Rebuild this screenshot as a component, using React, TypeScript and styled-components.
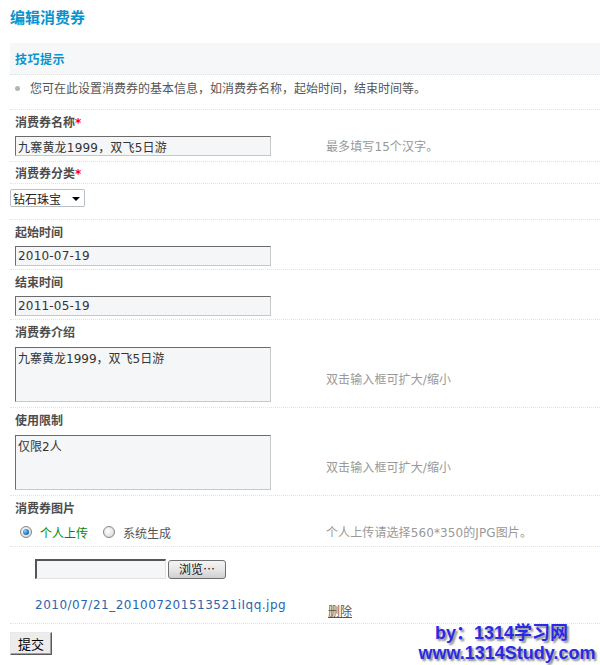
import React from "react";
import styled, { createGlobalStyle } from "styled-components";

const Global = createGlobalStyle`
  html, body { margin: 0; padding: 0; background: #fff; overflow: hidden; }
  body {
    font: 12px "DejaVu Sans", "Noto Sans CJK SC", sans-serif;
    color: #555;
  }
  * { box-sizing: border-box; }
`;

const DOT = "1px dotted #cfe6f7";

const Page = styled.div`
  position: relative;
  width: 600px;
  height: 665px;
  padding-left: 10px;
`;

const Title = styled.h3`
  margin: 0;
  height: 43px;
  line-height: 33px;
  font-size: 15px;
  font-weight: bold;
  color: #0a93cc;
  font-family: "Noto Sans CJK SC", sans-serif;
`;

const TipsHead = styled.div`
  height: 32px;
  line-height: 31px;
  padding-left: 5px;
  background: #f6f7f9;
  border-bottom: ${DOT};
  font-weight: bold;
  color: #0a93cc;
  font-family: "Noto Sans CJK SC", sans-serif;
  letter-spacing: 0.5px;
`;

const TipsItem = styled.div`
  display: flex;
  align-items: center;
  height: 35px;
  padding: 5px 0 12px 5px;
  line-height: 18px;
  border-bottom: ${DOT};
  color: #555;
`;

const Bullet = styled.span`
  width: 5px;
  height: 5px;
  border-radius: 50%;
  background: #b5b5b5;
  margin-right: 10px;
  flex: none;
`;

const Label = styled.div<{ $h: number; $border?: boolean }>`
  height: ${(p) => p.$h + (p.$border ? 1 : 0)}px;
  line-height: ${(p) => p.$h + 1}px;
  padding-left: 5px;
  font-weight: bold;
  color: #4d4d4d;
  font-family: "Noto Sans CJK SC", sans-serif;
  border-bottom: ${(p) => (p.$border ? DOT : "none")};
`;

const Star = styled.span`
  color: #ff0000;
  font-family: "DejaVu Sans", sans-serif;
`;

const FieldRow = styled.div<{ $h: number }>`
  display: grid;
  grid-template-columns: 316px 1fr;
  height: ${(p) => p.$h + 1}px;
  border-bottom: ${DOT};
`;

const Cell = styled.div<{ $pt: number; $pl?: number }>`
  padding-top: ${(p) => p.$pt}px;
  padding-left: ${(p) => p.$pl ?? 5}px;
`;

const Hint = styled.div<{ $shift?: number }>`
  align-self: center;
  padding-top: ${(p) => p.$shift ?? 0}px;
  line-height: 18px;
  color: #999;
  letter-spacing: 0.1px;
`;

const TextInput = styled.input`
  display: block;
  width: 256px;
  height: 20px;
  margin: 0;
  padding: 0 2px;
  border: 1px solid;
  border-color: #6b6b6b #c8c8c8 #c8c8c8 #6b6b6b;
  background: #f5f6f8;
  font: 12px "DejaVu Sans", "Noto Sans CJK SC", sans-serif;
  letter-spacing: 0.2px;
  color: #333;
  outline: none;
`;

const TextArea = styled.textarea`
  display: block;
  width: 256px;
  height: 55px;
  margin: 0;
  padding: 3px 2px;
  border: 1px solid;
  border-color: #6b6b6b #c8c8c8 #c8c8c8 #6b6b6b;
  background: #f5f6f8;
  font: 12px/16px "DejaVu Sans", "Noto Sans CJK SC", sans-serif;
  color: #333;
  resize: none;
  outline: none;
`;

const SelectWrap = styled.div`
  position: relative;
  width: 75px;
  height: 18px;
`;

const Select = styled.select`
  appearance: none;
  -webkit-appearance: none;
  display: block;
  width: 75px;
  height: 18px;
  margin: 0;
  padding: 0 0 0 2px;
  border: 1px solid #b9bec5;
  border-radius: 2px;
  background: #fff;
  font: 12px "Noto Sans CJK SC", sans-serif;
  color: #222;
  outline: none;
`;

const Arrow = styled.span`
  position: absolute;
  right: 5px;
  top: 8px;
  width: 0;
  height: 0;
  border-left: 4px solid transparent;
  border-right: 4px solid transparent;
  border-top: 4px solid #000;
  pointer-events: none;
`;

const RadioGroup = styled.div`
  display: flex;
  align-items: center;
  height: 28px;
  padding-left: 10px;
`;

const RadioItem = styled.label<{ $active?: boolean }>`
  display: flex;
  align-items: center;
  gap: 8px;
  margin-right: 15px;
  color: ${(p) => (p.$active ? "#008a00" : "#555")};
  font-family: "Noto Sans CJK SC", sans-serif;
`;

const RadioDot = styled.span<{ $on?: boolean }>`
  width: 12px;
  height: 12px;
  border-radius: 50%;
  border: 1px solid #858585;
  background: radial-gradient(circle at 40% 40%, #ffffff 0%, #e4e4e4 60%, #c4c4c4 100%);
  display: flex;
  align-items: center;
  justify-content: center;
  &::after {
    content: "";
    width: 6px;
    height: 6px;
    border-radius: 50%;
    display: ${(p) => (p.$on ? "block" : "none")};
    background: radial-gradient(circle at 35% 35%, #8fd3ff 0%, #1a7fd0 55%, #0b3f7a 100%);
  }
`;

const FileCell = styled.div`
  padding: 12px 0 0 25px;
  display: flex;
  flex-direction: column;
`;

const FileLine = styled.div`
  display: flex;
  align-items: center;
  gap: 2px;
  height: 20px;
`;

const FileBox = styled.span`
  width: 131px;
  height: 20px;
  border-style: solid;
  border-width: 2px 1px 1px 2px;
  border-color: #555 #e2e2e2 #e2e2e2 #555;
  background: #f5f6f8;
`;

const Browse = styled.button`
  width: 58px;
  height: 19px;
  margin: 0;
  padding: 0;
  border: 1px solid #6e6e6e;
  border-radius: 3px;
  background: linear-gradient(#f4f4f4, #e6e6e6 50%, #cfcfcf);
  font: 12px "Noto Sans CJK SC", sans-serif;
  color: #111;
  line-height: 16px;
`;

const FileLink = styled.a`
  margin-top: 17px;
  line-height: 18px;
  color: #2a64b0;
  text-decoration: none;
  letter-spacing: 0.5px;
  white-space: nowrap;
`;

const Delete = styled.a`
  align-self: end;
  padding: 0 0 3px 2px;
  line-height: 18px;
  color: #555;
  text-decoration: underline;
  font-family: "Noto Sans CJK SC", sans-serif;
`;

const Submit = styled.button`
  display: block;
  margin: 8px 0 0;
  width: 42px;
  height: 23px;
  padding: 0;
  border: 1px solid;
  border-color: #e8e8e8 #5a5a5a #5a5a5a #e8e8e8;
  box-shadow: inset -1px -1px 0 #a0a0a0;
  background: #ececec;
  font: 13px "Noto Sans CJK SC", sans-serif;
  color: #000;
`;

const Watermark = styled.div`
  position: absolute;
  left: 414px;
  top: 623px;
  width: 186px;
  text-align: center;
  font: bold 18px/20px "Liberation Sans", "Noto Sans CJK SC", sans-serif;
  color: #2a2ae6;
  text-shadow: 2px 2px 2px #8a8a8a;
  pointer-events: none;
`;

const WmLine = styled.div<{ $shift?: number }>`
  padding-right: ${(p) => p.$shift ?? 0}px;
  white-space: nowrap;
`;

export default function App() {
  return (
    <Page>
      <Global />
      <Title>编辑消费券</Title>
      <TipsHead>技巧提示</TipsHead>
      <TipsItem>
        <Bullet />
        您可在此设置消费券的基本信息，如消费券名称，起始时间，结束时间等。
      </TipsItem>

      <Label $h={22}>
        消费券名称<Star>*</Star>
      </Label>
      <FieldRow $h={29}>
        <Cell $pt={4}>
          <TextInput defaultValue="九寨黄龙1999，双飞5日游" />
        </Cell>
        <Hint>最多填写15个汉字。</Hint>
      </FieldRow>

      <Label $h={21} $border>
        消费券分类<Star>*</Star>
      </Label>
      <FieldRow $h={35}>
        <Cell $pt={5} $pl={0}>
          <SelectWrap>
            <Select defaultValue="钻石珠宝">
              <option>钻石珠宝</option>
            </Select>
            <Arrow />
          </SelectWrap>
        </Cell>
        <Hint />
      </FieldRow>

      <Label $h={22}>起始时间</Label>
      <FieldRow $h={27}>
        <Cell $pt={4}>
          <TextInput defaultValue="2010-07-19" />
        </Cell>
        <Hint />
      </FieldRow>

      <Label $h={22}>结束时间</Label>
      <FieldRow $h={27}>
        <Cell $pt={4}>
          <TextInput defaultValue="2011-05-19" />
        </Cell>
        <Hint />
      </FieldRow>

      <Label $h={22}>消费券介绍</Label>
      <FieldRow $h={65}>
        <Cell $pt={5}>
          <TextArea defaultValue="九寨黄龙1999，双飞5日游" />
        </Cell>
        <Hint $shift={11}>双击输入框可扩大/缩小</Hint>
      </FieldRow>

      <Label $h={22}>使用限制</Label>
      <FieldRow $h={65}>
        <Cell $pt={5}>
          <TextArea defaultValue="仅限2人" />
        </Cell>
        <Hint $shift={11}>双击输入框可扩大/缩小</Hint>
      </FieldRow>

      <Label $h={22}>消费券图片</Label>
      <FieldRow $h={28}>
        <RadioGroup>
          <RadioItem $active>
            <RadioDot $on />
            个人上传
          </RadioItem>
          <RadioItem>
            <RadioDot />
            系统生成
          </RadioItem>
        </RadioGroup>
        <Hint $shift={2}>个人上传请选择560*350的JPG图片。</Hint>
      </FieldRow>

      <FieldRow $h={76}>
        <FileCell>
          <FileLine>
            <FileBox />
            <Browse type="button">浏览…</Browse>
          </FileLine>
          <FileLink href="#">2010/07/21_201007201513521iIqq.jpg</FileLink>
        </FileCell>
        <Delete href="#">删除</Delete>
      </FieldRow>

      <Submit type="button">提交</Submit>

      <Watermark>
        <WmLine $shift={11}>by：1314学习网</WmLine>
        <WmLine>www.1314Study.com</WmLine>
      </Watermark>
    </Page>
  );
}
